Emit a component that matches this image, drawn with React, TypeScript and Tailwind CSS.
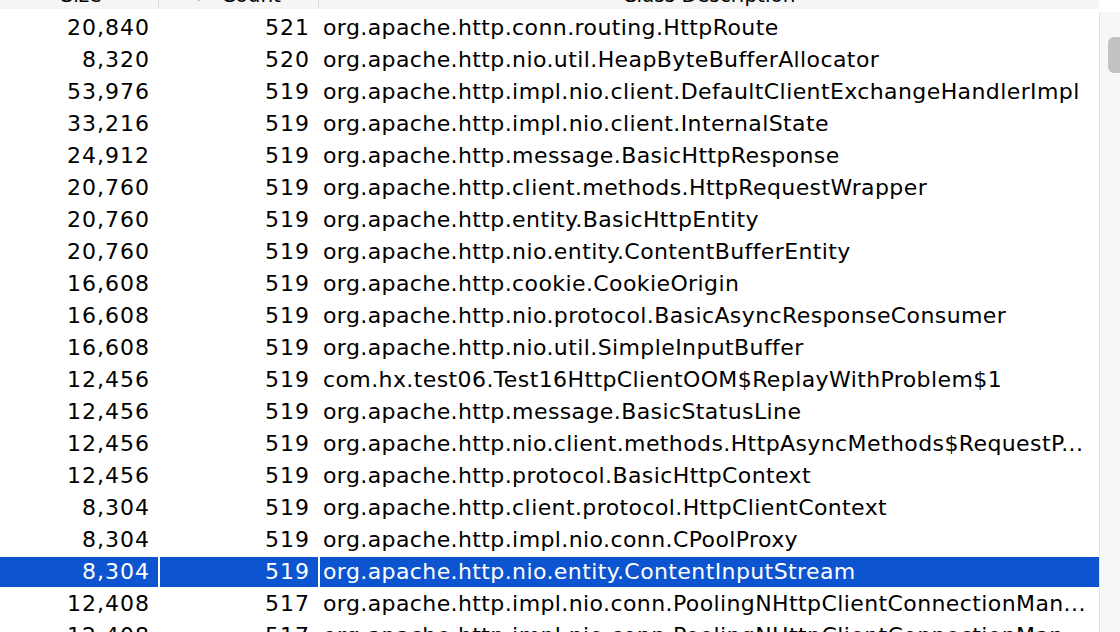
import React from "react";

const rows: [string, string, string][] = [
  ["20,840", "521", "org.apache.http.conn.routing.HttpRoute"],
  ["8,320", "520", "org.apache.http.nio.util.HeapByteBufferAllocator"],
  ["53,976", "519", "org.apache.http.impl.nio.client.DefaultClientExchangeHandlerImpl"],
  ["33,216", "519", "org.apache.http.impl.nio.client.InternalState"],
  ["24,912", "519", "org.apache.http.message.BasicHttpResponse"],
  ["20,760", "519", "org.apache.http.client.methods.HttpRequestWrapper"],
  ["20,760", "519", "org.apache.http.entity.BasicHttpEntity"],
  ["20,760", "519", "org.apache.http.nio.entity.ContentBufferEntity"],
  ["16,608", "519", "org.apache.http.cookie.CookieOrigin"],
  ["16,608", "519", "org.apache.http.nio.protocol.BasicAsyncResponseConsumer"],
  ["16,608", "519", "org.apache.http.nio.util.SimpleInputBuffer"],
  ["12,456", "519", "com.hx.test06.Test16HttpClientOOM$ReplayWithProblem$1"],
  ["12,456", "519", "org.apache.http.message.BasicStatusLine"],
  ["12,456", "519", "org.apache.http.nio.client.methods.HttpAsyncMethods$RequestP..."],
  ["12,456", "519", "org.apache.http.protocol.BasicHttpContext"],
  ["8,304", "519", "org.apache.http.client.protocol.HttpClientContext"],
  ["8,304", "519", "org.apache.http.impl.nio.conn.CPoolProxy"],
  ["8,304", "519", "org.apache.http.nio.entity.ContentInputStream"],
  ["12,408", "517", "org.apache.http.impl.nio.conn.PoolingNHttpClientConnectionMan..."],
  ["12,408", "517", "org.apache.http.impl.nio.conn.PoolingNHttpClientConnectionMan..."],
];

const SELECTED = 17;

export default function App() {
  return (
    <div
      className="w-[1120px] h-[632px] overflow-hidden bg-white text-black flex"
      style={{ fontFamily: '"DejaVu Sans", "Liberation Sans", sans-serif' }}
    >
      <div className="w-[1099px] flex flex-col">
        {/* header, mostly scrolled above the top edge */}
        <div className="h-[32px] -mt-[23px] shrink-0 bg-[#f5f5f5] flex items-center text-[20px] leading-none pb-[1px]">
          <div className="w-[159px] h-full flex items-center justify-center border-r border-[#dcdcdc] pt-[5px]">
            <span className="pl-1">Size</span>
          </div>
          <div className="w-[160px] h-full flex items-center justify-center border-r border-[#dcdcdc] gap-[20px] pt-[5px]">
            <span className="text-[11px] mt-[4px]">▾</span>
            <span>Count</span>
          </div>
          <div className="flex-1 h-full flex items-center justify-center pt-[5px]">Class Description</div>
        </div>
        <div className="h-[3px] shrink-0" />
        {rows.map((r, i) => {
          const sel = i === SELECTED;
          const cell = sel ? "bg-[#0c54d0] text-white" : "";
          return (
            <div key={i} className="h-[32px] shrink-0 flex pt-[1px] pb-[1px] text-[22px] leading-none">
              <div className={`w-[158px] flex items-center justify-end pr-[8px] tracking-[1px] ${cell}`}>{r[0]}</div>
              <div className="w-[2px]" />
              <div className={`w-[158px] flex items-center justify-end pr-[8px] tracking-[1px] ${cell}`}>{r[1]}</div>
              <div className="w-[2px]" />
              <div className={`flex-1 flex items-center pl-[3px] whitespace-nowrap overflow-hidden tracking-[0.4px] ${cell}`}>{r[2]}</div>
            </div>
          );
        })}
      </div>
      <div className="flex-1 flex flex-col">
        <div className="h-[12px] bg-white" />
        <div className="flex-1 bg-[#f7f7f7] border-l border-[#e4e4e4] flex justify-end pt-[25px]">
          <div className="w-[12px] h-[36px] rounded-l-[6px] bg-[#c2c2c2]" />
        </div>
      </div>
    </div>
  );
}
